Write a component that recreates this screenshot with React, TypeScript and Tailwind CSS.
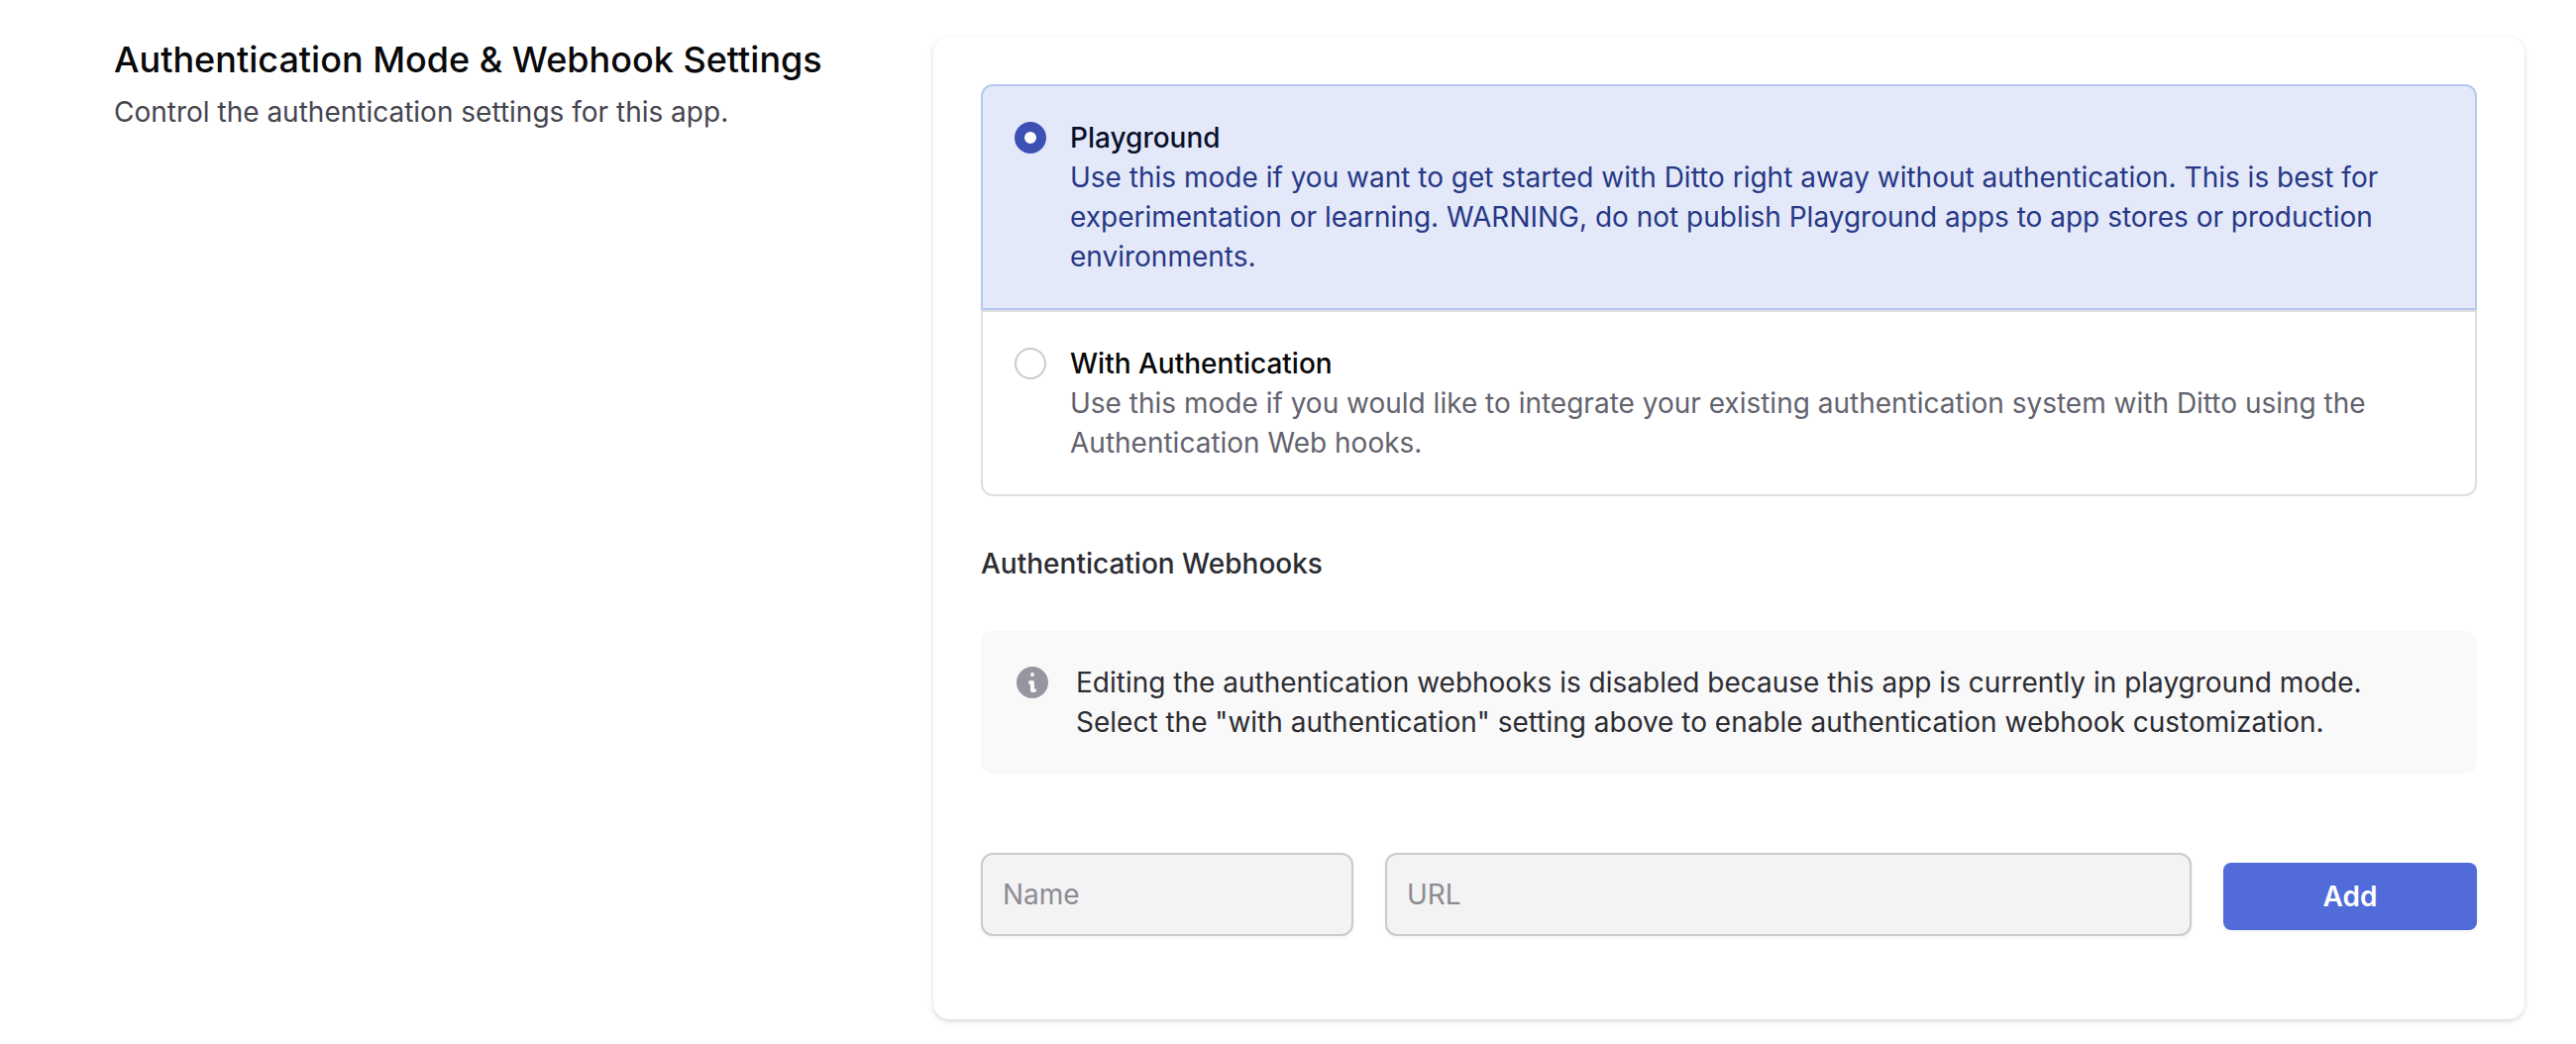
import { useState } from "react";

type Mode = {
  id: string;
  title: string;
  description: string;
};

const modes: Mode[] = [
  {
    id: "playground",
    title: "Playground",
    description:
      "Use this mode if you want to get started with Ditto right away without authentication. This is best for experimentation or learning. WARNING, do not publish Playground apps to app stores or production environments.",
  },
  {
    id: "with-authentication",
    title: "With Authentication",
    description:
      "Use this mode if you would like to integrate your existing authentication system with Ditto using the Authentication Web hooks.",
  },
];

function ModeOption({
  mode,
  checked,
  onSelect,
}: {
  mode: Mode;
  checked: boolean;
  onSelect: () => void;
}) {
  return (
    <label
      htmlFor={mode.id}
      className={
        "flex cursor-pointer border-2 p-8 first:rounded-t-xl last:rounded-b-xl " +
        (checked ? "border-[#b7c7f0] bg-[#e4e9fa]" : "border-[#dfdfe1] bg-white")
      }
    >
      <input
        type="radio"
        id={mode.id}
        name="authentication-mode"
        checked={checked}
        onChange={onSelect}
        aria-describedby={mode.id + "-description"}
        className={
          "mt-1 size-8 shrink-0 appearance-none rounded-full " +
          (checked ? "border-10 border-[#3d51b5] bg-white" : "border-2 border-[#cacad0] bg-white")
        }
      />
      <span className="ml-6 flex flex-col">
        <span className={"font-medium " + (checked ? "text-[#0b102b]" : "text-[#09090b]")}>{mode.title}</span>
        <span id={mode.id + "-description"} className={checked ? "text-[#273885]" : "text-[#63636e]"}>
          {mode.description}
        </span>
      </span>
    </label>
  );
}

function InfoIcon() {
  return (
    <svg viewBox="0 0 20 20" fill="currentColor" aria-hidden="true" className="size-10 shrink-0 text-[#9696a0]">
      <path
        fillRule="evenodd"
        clipRule="evenodd"
        d="M18 10a8 8 0 11-16 0 8 8 0 0116 0zm-7-4a1 1 0 11-2 0 1 1 0 012 0zM9 9a1 1 0 000 2v3a1 1 0 001 1h1a1 1 0 100-2v-3a1 1 0 00-1-1H9z"
      />
    </svg>
  );
}

const fieldClass =
  "h-[84px] min-w-0 rounded-xl border-2 border-[#cacad0] bg-[#f3f3f3] px-5 shadow-[0_2px_4px_rgba(0,0,0,0.05)] placeholder:text-[#8c8c93]";

export default function App() {
  const [selected, setSelected] = useState("playground");

  return (
    <main className="grid grid-cols-3 gap-12 bg-white pt-[37px] pr-[52px] pb-6 pl-[115px] font-['Inter',sans-serif] text-[28px] leading-10 [font-variant-ligatures:none]">
      <header>
        <h1 className="text-4xl leading-[46px] font-medium text-[#09090b]">Authentication Mode &amp; Webhook Settings</h1>
        <p className="mt-[10px] text-[#45454f]">Control the authentication settings for this app.</p>
      </header>

      <section className="col-span-2 rounded-2xl bg-white px-12 pt-12 pb-[84px] shadow-[0_2px_6px_rgba(0,0,0,0.1),0_2px_4px_rgba(0,0,0,0.06)]">
        <fieldset aria-label="Authentication mode">
          {modes.map((mode) => (
            <ModeOption
              key={mode.id}
              mode={mode}
              checked={selected === mode.id}
              onSelect={() => setSelected(mode.id)}
            />
          ))}
        </fieldset>

        <h2 className="mt-12 font-medium text-[#2c2c33]">Authentication Webhooks</h2>

        <div className="mt-12 flex gap-6 rounded-xl bg-[#f9f9f9] p-8">
          <InfoIcon />
          <p className="text-[#2c2c33]">
            Editing the authentication webhooks is disabled because this app is currently in playground mode.
            <br />
            Select the "with authentication" setting above to enable authentication webhook customization.
          </p>
        </div>

        <form className="mt-20 flex gap-8" onSubmit={(event) => event.preventDefault()}>
          <input type="text" aria-label="Name" placeholder="Name" disabled className={fieldClass + " w-[376px]"} />
          <input type="url" aria-label="URL" placeholder="URL" disabled className={fieldClass + " flex-1"} />
          <button
            type="submit"
            className="mt-[10px] h-[68px] w-64 rounded-lg bg-[#516bd9] font-semibold text-white shadow-[0_2px_4px_rgba(0,0,0,0.05)]"
          >
            Add
          </button>
        </form>
      </section>
    </main>
  );
}
